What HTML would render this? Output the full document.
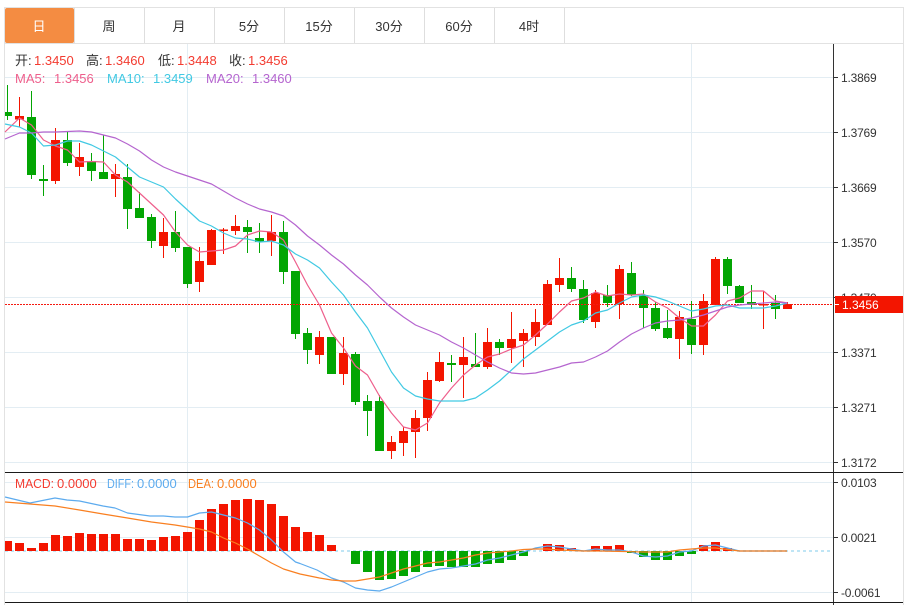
<!DOCTYPE html>
<html lang="zh"><head><meta charset="utf-8"><title>K</title>
<style>
html,body{margin:0;padding:0;background:#fff}
svg{display:block}
text{font-family:"Liberation Sans","Noto Sans CJK SC",sans-serif}
.tab{font-size:13px;fill:#333;text-anchor:middle}
.ax{font-size:12px;fill:#333;letter-spacing:-.2px}
.lg{font-size:13px}
</style></head><body>
<svg width="911" height="605" viewBox="0 0 911 605" xmlns="http://www.w3.org/2000/svg">
<rect width="911" height="605" fill="#fff"/>
<!-- frame -->
<path d="M4.5 605V7.5H903.5V605M5 43.5H903" fill="none" stroke="#e2e2e2"/>
<path d="M74.5 8V43M144.5 8V43M214.5 8V43M284.5 8V43M354.5 8V43M424.5 8V43M494.5 8V43M564.5 8V43" stroke="#dedede"/>
<rect x="5" y="8" width="69" height="35" rx="2" fill="#f48c42"/>
<text x="39" y="31" class="tab" fill="#fff" style="fill:#fff">日</text>
<text x="109" y="31" class="tab">周</text>
<text x="179" y="31" class="tab">月</text>
<text x="249" y="31" class="tab">5分</text>
<text x="319" y="31" class="tab">15分</text>
<text x="389" y="31" class="tab">30分</text>
<text x="459" y="31" class="tab">60分</text>
<text x="529" y="31" class="tab">4时</text>
<!-- grid -->
<path d="M5 77.5H833M5 132.5H833M5 187.5H833M5 242.5H833M5 297.5H833M5 352.5H833M5 407.5H833M5 462.5H833M5 482.5H833M5 537.5H833M5 592.5H833M187.5 44V602M691.5 44V602" stroke="#e3edf3" fill="none"/>
<!-- green candles -->
<path stroke="#03a503" fill="none" d="M7.5 85V120M31.5 91V179M43.5 165V196M67.5 132V166M91.5 153V181M103.5 135V179M127.5 164V229M139.5 192V218M151.5 214V248M175.5 211V252M187.5 247V288M247.5 220V253M259.5 223V253M283.5 221V284M295.5 271V339M307.5 328V364M331.5 337V374M355.5 352V405M367.5 395V436M379.5 395V451M451.5 355V382M475.5 333V367M499.5 339V355M571.5 267V292M583.5 280V323M607.5 285V307M631.5 262V296M643.5 290V328M655.5 302V331M667.5 310V339M691.5 301V354M727.5 257V294M739.5 285V303M751.5 285V309M775.5 295V319"/>
<path fill="#03a503" d="M5 112h7V116h-7zM27 117h9V175h-9zM39 179h9V181h-9zM63 140h9V163h-9zM87 161h9V171h-9zM99 172h9V179h-9zM123 177h9V209h-9zM135 208h9V218h-9zM147 217h9V241h-9zM171 232h9V248h-9zM183 247h9V284h-9zM243 227h9V232h-9zM255 238h9V242h-9zM279 232h9V272h-9zM291 271h9V334h-9zM303 333h9V350h-9zM327 337h9V374h-9zM351 354h9V402h-9zM363 401h9V411h-9zM375 401h9V451h-9zM447 363h9V365h-9zM471 364h9V367h-9zM495 342h9V348h-9zM567 278h9V289h-9zM579 289h9V320h-9zM603 295h9V303h-9zM627 273h9V295h-9zM639 295h9V308h-9zM651 308h9V329h-9zM663 328h9V338h-9zM687 319h9V345h-9zM723 259h9V286h-9zM735 286h9V303h-9zM747 302h9V305h-9zM771 303h9V309h-9z"/>
<!-- red candles -->
<path stroke="#f31500" fill="none" d="M19.5 97V127M55.5 128V184M79.5 143V176M115.5 164V197M163.5 218V258M199.5 247V292M211.5 229V265M223.5 228V254M235.5 215V235M271.5 215V256M319.5 331V364M343.5 337V385M391.5 436V459M403.5 427V456M415.5 410V458M427.5 372V431M439.5 352V382M463.5 337V398M487.5 328V369M511.5 312V363M523.5 329V367M535.5 309V346M547.5 280V325M559.5 258V292M595.5 290V328M619.5 265V319M679.5 311V359M703.5 294V355M715.5 257V305M763.5 291V329M787.5 302V309"/>
<path fill="#f31500" d="M15 116h9V119.5h-9zM51 140h9V181h-9zM75 157h9V167h-9zM111 174h9V179h-9zM159 232h9V246h-9zM195 261h9V282h-9zM207 230h9V265h-9zM219 229.500h9V231h-9zM231 226h9V231h-9zM267 232h9V241h-9zM315 337h9V355h-9zM339 353h9V374h-9zM387 442h9V451h-9zM399 431h9V443h-9zM411 418h9V432h-9zM423 380h9V418h-9zM435 362h9V381h-9zM459 357h9V365h-9zM483 342h9V367h-9zM507 339h9V348h-9zM519 333h9V341h-9zM531 322h9V337h-9zM543 284h9V325h-9zM555 278h9V285h-9zM591 293h9V322h-9zM615 269h9V304h-9zM675 317h9V339h-9zM699 301h9V345h-9zM711 259h9V305h-9zM759 304h9V305.500h-9zM783 304h9V309h-9z"/>
<!-- price line -->
<path d="M5 304.500H833" stroke="#f51a10" stroke-dasharray="2 1" fill="none"/>
<!-- MAs -->
<g fill="none" stroke-width="1.2" stroke-linejoin="round">
<path stroke="#ee5f8c" d="M5 132L19.500 118L31.500 125L43.500 140L55.500 146L67.500 150L79.500 162L91.500 161.500L103.500 162L115.500 175L127.500 182L139.500 193L151.500 204L163.500 215L175.500 232L187.500 245L199.500 252L211.500 251L223.500 250L235.500 246L247.500 235L259.500 231L271.500 232L283.500 240L295.500 262L307.500 285L319.500 305L331.500 333L343.500 348L355.500 366L367.500 375L379.500 396L391.500 413L403.500 427L415.500 430L427.500 423L439.500 403L451.500 388L463.500 375L475.500 365L487.500 357L499.500 354L511.500 349L523.500 345L535.500 335L547.500 324L559.500 312L571.500 301L583.500 298L595.500 292L607.500 296L619.500 294L631.500 295L643.500 294L655.500 302L667.500 308L679.500 318L691.500 326L703.500 326L715.500 315L727.500 301L739.500 298L751.500 291L763.500 291L775.500 301L787.500 303"/>
<path stroke="#41c9e3" d="M5 124L19.500 127L31.500 133L43.500 146L55.500 145L67.500 141L79.500 141L91.500 145L103.500 151L115.500 157L127.500 167L139.500 177L151.500 182L163.500 187L175.500 199L187.500 210L199.500 221L211.500 226L223.500 233L235.500 238L247.500 239L259.500 242L271.500 241L283.500 245L295.500 254L307.500 260L319.500 268L331.500 282L343.500 295L355.500 312L367.500 328L379.500 350L391.500 372L403.500 388L415.500 396L427.500 399L439.500 401L451.500 401L463.500 401L475.500 398L487.500 390L499.500 381L511.500 370L523.500 359L535.500 350L547.500 341L559.500 332L571.500 325L583.500 321L595.500 313L607.500 310L619.500 303L631.500 297L643.500 295L655.500 297L667.500 301L679.500 306L691.500 311L703.500 309L715.500 306L727.500 305L739.500 308L751.500 308L763.500 308L775.500 306L787.500 303"/>
<path stroke="#b565cf" d="M5 139L19.500 133L31.500 133L43.500 132L55.500 132L67.500 131.500L79.500 131L91.500 132L103.500 135L115.500 138L127.500 144L139.500 151L151.500 160L163.500 167L175.500 172L187.500 176L199.500 180L211.500 184L223.500 191L235.500 198L247.500 204L259.500 209L271.500 212L283.500 216L295.500 225L307.500 236L319.500 245L331.500 255L343.500 264L355.500 275L367.500 285L379.500 297L391.500 308L403.500 317L415.500 325L427.500 330L439.500 335L451.500 342L463.500 348L475.500 355L487.500 362L499.500 368L511.500 373L523.500 374L535.500 373L547.500 370L559.500 367L571.500 363L583.500 362L595.500 357L607.500 351L619.500 342L631.500 334L643.500 328L655.500 323L667.500 321L679.500 320L691.500 318L703.500 315L715.500 311L727.500 307L739.500 305L751.500 304L763.500 303L775.500 302L787.500 303"/>
</g>
<!-- MACD zero -->
<path d="M5 551H833" stroke="#bfe5f5" stroke-width="2" stroke-dasharray="3 3" fill="none"/>
<!-- MACD bars red -->
<path fill="#f31500" d="M5 541h7V551h-7zM15 543h9V551h-9zM27 548h9V551h-9zM39 543h9V551h-9zM51 535h9V551h-9zM63 536h9V551h-9zM75 533h9V551h-9zM87 534h9V551h-9zM99 534h9V551h-9zM111 534h9V551h-9zM123 539h9V551h-9zM135 539h9V551h-9zM147 540h9V551h-9zM159 537h9V551h-9zM171 536h9V551h-9zM183 532h9V551h-9zM195 520h9V551h-9zM207 509h9V551h-9zM219 504h9V551h-9zM231 500h9V551h-9zM243 499h9V551h-9zM255 500h9V551h-9zM267 504h9V551h-9zM279 516h9V551h-9zM291 527h9V551h-9zM303 532h9V551h-9zM315 535h9V551h-9zM327 545h9V551h-9zM543 544h9V551h-9zM555 545h9V551h-9zM567 548h9V551h-9zM591 546h9V551h-9zM603 546h9V551h-9zM615 545h9V551h-9zM699 545h9V551h-9zM711 542h9V551h-9zM723 548h9V551h-9z"/>
<!-- MACD bars green -->
<path fill="#03a503" d="M351 551h9V564h-9zM363 551h9V572h-9zM375 551h9V580h-9zM387 551h9V579h-9zM399 551h9V576h-9zM411 551h9V572h-9zM423 551h9V567h-9zM435 551h9V566h-9zM447 551h9V567h-9zM459 551h9V567h-9zM471 551h9V567h-9zM483 551h9V564h-9zM495 551h9V563h-9zM507 551h9V560h-9zM519 551h9V556h-9zM627 551h9V553h-9zM639 551h9V557h-9zM651 551h9V560h-9zM663 551h9V560h-9zM675 551h9V556h-9zM687 551h9V554h-9z"/>
<!-- DIFF / DEA -->
<g fill="none" stroke-width="1.2" stroke-linejoin="round">
<path stroke="#5dabee" d="M5 497L30 503L55 498L67 500L79.500 501L103 506L115 508L127.500 513L150 516L163.500 516L175 517L187.500 517L199.500 513L211.500 512L223.500 515L235.500 518L247.500 523L259.500 530L271.500 540L283.500 552L295.500 562L300 563.500L317 570L331.500 578L343.500 582L355.500 588L367.500 590L379.500 591L391.500 587L403.500 582L415.500 577L427.500 572L439.500 569L451.500 568L463.500 566L475.500 564L487.500 560L499.500 558L511.500 555L523.500 552L535.500 548L547.500 546L559.500 547L571.500 549L583.500 551L595.500 549L607 550L619.500 550L631.500 552L643.500 556L655.500 557L667.500 556L679.500 552L691.500 551L703.500 546L715.500 545L727.500 548L739.500 551L787 551"/>
<path stroke="#f97f20" d="M5 502L30 504L55 506L79.500 510L103 514L127.500 518L151.500 522L175 525L199.500 529L211.500 532L223.500 538L235.500 543L247.500 549L259.500 556L271.500 563L283.500 569L300 574L319.500 578L331.500 580L343.500 581L355.500 581L367.500 579L379.500 577L391.500 573L403.500 569L415.500 566L427.500 563L439.500 562L451.500 560L463.500 558L475.500 555L487.500 553L499.500 552L511.500 551L523.500 549.500L535.500 549L547.500 549L559.500 550L583.500 551L600 551L643.500 552L667 552L679.500 550L703.500 548L715.500 548L739.500 551L787 551"/>
</g>
<!-- axes -->
<path d="M833.500 44V605" stroke="#333" fill="none"/>
<path d="M5 472.500H903M5 602.500H903" stroke="#1a1a1a" fill="none"/>
<path d="M834 77.500H838M834 132.500H838M834 187.500H838M834 242.500H838M834 297.500H838M834 352.500H838M834 407.500H838M834 462.500H838M834 482.500H838M834 537.500H838M834 592.500H838" stroke="#333" fill="none"/>
<g class="ax">
<text class="ax" x="841" y="82">1.3869</text>
<text class="ax" x="841" y="137">1.3769</text>
<text class="ax" x="841" y="192">1.3669</text>
<text class="ax" x="841" y="247">1.3570</text>
<text class="ax" x="841" y="302">1.3470</text>
<text class="ax" x="841" y="357">1.3371</text>
<text class="ax" x="841" y="412">1.3271</text>
<text class="ax" x="841" y="467">1.3172</text>
<text class="ax" x="841" y="487">0.0103</text>
<text class="ax" x="841" y="542">0.0021</text>
<text class="ax" x="841" y="597">-0.0061</text>
</g>
<!-- price tag -->
<rect x="835" y="296" width="68" height="17" fill="#f31500"/>
<path d="M835 304.500H839" stroke="#fff" fill="none"/>
<text x="842" y="309" font-size="12" fill="#fff">1.3456</text>
<!-- legends -->
<g class="lg">
<text class="lg" x="15" y="65" fill="#333">开:</text><text class="lg" x="34" y="65" fill="#f33b30">1.3450</text>
<text class="lg" x="86" y="65" fill="#333">高:</text><text class="lg" x="105" y="65" fill="#f33b30">1.3460</text>
<text class="lg" x="158" y="65" fill="#333">低:</text><text class="lg" x="177" y="65" fill="#f33b30">1.3448</text>
<text class="lg" x="229" y="65" fill="#333">收:</text><text class="lg" x="248" y="65" fill="#f33b30">1.3456</text>
<text class="lg" x="15" y="83" fill="#ee5f8c">MA5:</text><text class="lg" x="54" y="83" fill="#ee5f8c">1.3456</text>
<text class="lg" x="107" y="83" fill="#41c9e3">MA10:</text><text class="lg" x="153" y="83" fill="#41c9e3">1.3459</text>
<text class="lg" x="206" y="83" fill="#b565cf">MA20:</text><text class="lg" x="252" y="83" fill="#b565cf">1.3460</text>
<text class="lg" x="15" y="488" fill="#f33b30" textLength="39" lengthAdjust="spacingAndGlyphs">MACD:</text><text class="lg" x="57" y="488" fill="#f33b30">0.0000</text>
<text class="lg" x="107" y="488" fill="#5dabee" textLength="27" lengthAdjust="spacingAndGlyphs">DIFF:</text><text class="lg" x="137" y="488" fill="#5dabee">0.0000</text>
<text class="lg" x="188" y="488" fill="#f97f20" textLength="26" lengthAdjust="spacingAndGlyphs">DEA:</text><text class="lg" x="217" y="488" fill="#f97f20">0.0000</text>
</g>
</svg>
</body></html>
